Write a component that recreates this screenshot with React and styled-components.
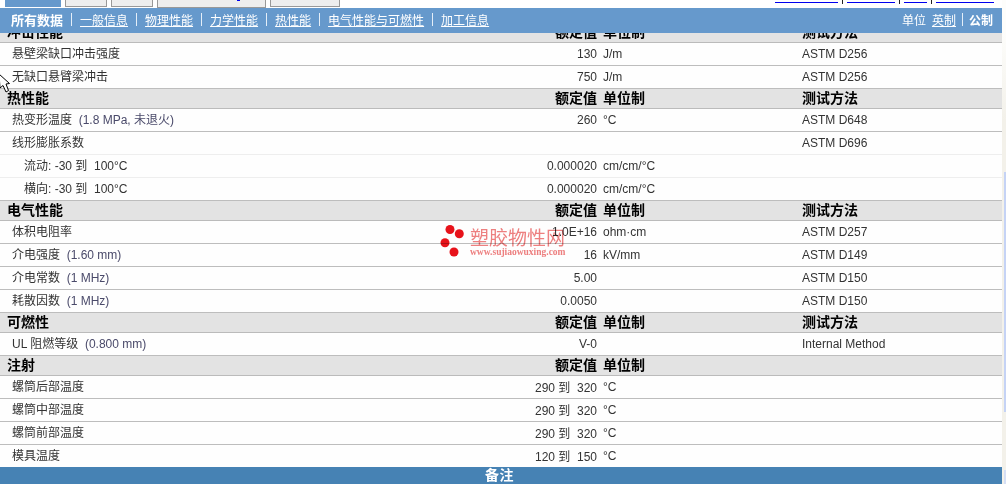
import React from 'react'
import styled, { createGlobalStyle } from 'styled-components'

const GlobalStyle = createGlobalStyle`
  html, body { margin: 0; padding: 0; background: #fff; }
  body { font-family: "Liberation Sans", "Noto Sans CJK SC", sans-serif; font-size: 12px; color: #333; }
`

const Page = styled.div`
  position: relative;
  display: flex;
  width: 1006px;
  height: 484px;
  overflow: hidden;
`

const Main = styled.div`
  display: flex;
  flex-direction: column;
  width: 1002px;
  height: 100%;
`

const TopStrip = styled.div`
  display: flex;
  justify-content: space-between;
  height: 8px;
  flex: none;
  overflow: hidden;
`

const Tabs = styled.div`
  display: flex;
  align-items: flex-start;
  gap: 4px;
  padding-left: 5px;
`

const Tab = styled.div`
  position: relative;
  box-sizing: border-box;
  width: ${(p) => p.$width}px;
  height: ${(p) => (p.$tall ? 8 : 7)}px;
  background: ${(p) => (p.$active ? '#6699cc' : '#eeeeee')};
  border: 1px solid ${(p) => (p.$active ? '#6699cc' : '#999')};
  border-top: 0;
`

const TabGlyph = styled.span`
  position: absolute;
  top: 0;
  left: 79px;
  width: 3px;
  height: 1px;
  background: #0000ee;
`

const TopLinks = styled.div`
  display: flex;
  align-items: flex-start;
  gap: 4px;
  padding-right: 8px;
`

const TopLink = styled.span`
  display: block;
  box-sizing: border-box;
  width: ${(p) => p.$width}px;
  height: 3px;
  border-bottom: 1px solid #0000ee;
`

const TopSep = styled.span`
  display: block;
  width: 1px;
  height: 4px;
  background: #222;
`

const NavBar = styled.div`
  display: flex;
  align-items: center;
  justify-content: space-between;
  flex: none;
  box-sizing: border-box;
  height: 25px;
  padding: 0 9px 2px 11px;
  background: #6699cc;
  color: #fff;
`

const NavGroup = styled.div`
  display: flex;
  align-items: center;
  gap: ${(p) => p.$gap}px;
`

const NavCurrent = styled.b`
  font-size: 13px;
  font-weight: 700;
`

const NavLink = styled.a`
  color: #fff;
  text-decoration: underline;
  font-size: 12px;
`

const NavSep = styled.span`
  width: 1px;
  height: 13px;
  background: #e4eef8;
`

const ScrollArea = styled.div`
  flex: 1;
  min-height: 0;
  overflow: hidden;
`

const Sheet = styled.div`
  margin-top: -10px;
`

const columns = `
  display: grid;
  grid-template-columns: 497px 100px 205px 200px;
  align-items: center;
  box-sizing: border-box;
`

const HeadRow = styled.div`
  ${columns}
  height: 20px;
  padding-bottom: 3px;
  background: #e3e3e3;
  border-bottom: 1px solid #bbb;
  font-family: "Noto Sans CJK SC", sans-serif;
  font-size: 14px;
  line-height: 16px;
  font-weight: 700;
  color: #000;
`

const Row = styled.div`
  ${columns}
  height: 23px;
  background: #fefefe;
  border-bottom: 1px solid ${(p) => (p.$soft ? '#eeeeee' : '#bdbdbd')};
`

const HeadName = styled.div`
  padding-left: 7px;
`

const Name = styled.div`
  padding-left: ${(p) => (p.$sub ? 24 : 12)}px;
  padding-bottom: 4px;
  white-space: pre;
`

const Value = styled.div`
  padding-bottom: ${(p) => (p.$range ? 2 : 0)}px;
  text-align: right;
  white-space: pre;
`

const Unit = styled.div`
  padding-left: 6px;
`

const Note = styled.span`
  color: #4a4a6a;
`

const FooterBar = styled.div`
  flex: none;
  box-sizing: border-box;
  height: 17px;
  padding-right: 3px;
  line-height: 16px;
  background: #4682b4;
  color: #fff;
  font-size: 14px;
  font-weight: 700;
  text-align: center;
  letter-spacing: 0.5px;
`

const ScrollTrack = styled.div`
  display: flex;
  flex-direction: column;
  align-items: flex-end;
  width: 4px;
  padding-top: 172px;
  box-sizing: border-box;
  background: linear-gradient(#fdfdfb 33px, #f3f1ea 120px);
`

const ScrollThumb = styled.div`
  width: 2px;
  height: 240px;
  background: #c5d3f5;
`

const ScrollArrow = styled.div`
  width: 2px;
  height: 14px;
  margin-top: 58px;
  background: #d5dff5;
`

const Watermark = styled.div`
  position: absolute;
  left: 440px;
  top: 224px;
  display: flex;
  gap: 4px;
  width: 130px;
  pointer-events: none;
  mix-blend-mode: multiply;
`

const MarkText = styled.div`
  display: flex;
  flex-direction: column;
  padding-top: 2px;
  color: #ee7f7f;
`

const MarkTitle = styled.div`
  font-family: "Noto Sans CJK SC", sans-serif;
  font-size: 19px;
  line-height: 21px;
  white-space: nowrap;
`

const MarkUrl = styled.div`
  font-family: "Liberation Serif", serif;
  font-size: 9.5px;
  line-height: 10px;
  font-weight: 700;
  white-space: nowrap;
`

const Cursor = styled.svg`
  position: absolute;
  left: 0;
  top: 73px;
`

const topLinkWidths = [63, 48, 23, 58]
const navItems = ['一般信息', '物理性能', '力学性能', '热性能', '电气性能与可燃性', '加工信息']

const sections = [
  {
    title: '冲击性能',
    method: '测试方法',
    rows: [
      { name: '悬壁梁缺口冲击强度', value: '130', unit: 'J/m', test: 'ASTM D256' },
      { name: '无缺口悬臂梁冲击', value: '750', unit: 'J/m', test: 'ASTM D256' }
    ]
  },
  {
    title: '热性能',
    method: '测试方法',
    rows: [
      { name: '热变形温度', note: '(1.8 MPa, 未退火)', value: '260', unit: '°C', test: 'ASTM D648' },
      { name: '线形膨胀系数', test: 'ASTM D696', soft: true },
      { name: '流动: -30 到  100°C', sub: true, value: '0.000020', unit: 'cm/cm/°C', soft: true },
      { name: '横向: -30 到  100°C', sub: true, value: '0.000020', unit: 'cm/cm/°C' }
    ]
  },
  {
    title: '电气性能',
    method: '测试方法',
    rows: [
      { name: '体积电阻率', value: '1.0E+16', unit: 'ohm·cm', test: 'ASTM D257' },
      { name: '介电强度', note: '(1.60 mm)', value: '16', unit: 'kV/mm', test: 'ASTM D149' },
      { name: '介电常数', note: '(1 MHz)', value: '5.00', test: 'ASTM D150' },
      { name: '耗散因数', note: '(1 MHz)', value: '0.0050', test: 'ASTM D150' }
    ]
  },
  {
    title: '可燃性',
    method: '测试方法',
    rows: [{ name: 'UL 阻燃等级', note: '(0.800 mm)', value: 'V-0', test: 'Internal Method' }]
  },
  {
    title: '注射',
    rows: [
      { name: '螺筒后部温度', value: '290 到  320', unit: '°C', range: true },
      { name: '螺筒中部温度', value: '290 到  320', unit: '°C', range: true },
      { name: '螺筒前部温度', value: '290 到  320', unit: '°C', range: true },
      { name: '模具温度', value: '120 到  150', unit: '°C', range: true }
    ]
  }
]

const Section = ({ section }) => (
  <>
    <HeadRow>
      <HeadName>{section.title}</HeadName>
      <Value>额定值</Value>
      <Unit>单位制</Unit>
      <div>{section.method}</div>
    </HeadRow>
    {section.rows.map((row) => (
      <Row key={row.name} $soft={row.soft}>
        <Name $sub={row.sub}>
          {row.name}
          {row.note && <Note>{`  ${row.note}`}</Note>}
        </Name>
        <Value $range={row.range}>{row.value}</Value>
        <Unit>{row.unit}</Unit>
        <div>{row.test}</div>
      </Row>
    ))}
  </>
)

const App = () => (
  <Page>
    <GlobalStyle />
    <Main>
      <TopStrip>
        <Tabs>
          <Tab $width={56} $active />
          <Tab $width={42} />
          <Tab $width={42} />
          <Tab $width={109} $tall>
            <TabGlyph />
          </Tab>
          <Tab $width={70} />
        </Tabs>
        <TopLinks>
          {topLinkWidths.map((width, i) => (
            <React.Fragment key={width}>
              {i > 0 && <TopSep />}
              <TopLink $width={width} />
            </React.Fragment>
          ))}
        </TopLinks>
      </TopStrip>
      <NavBar>
        <NavGroup $gap={8}>
          <NavCurrent>所有数据</NavCurrent>
          {navItems.map((item) => (
            <React.Fragment key={item}>
              <NavSep />
              <NavLink>{item}</NavLink>
            </React.Fragment>
          ))}
        </NavGroup>
        <NavGroup $gap={6}>
          <span>单位</span>
          <NavLink>英制</NavLink>
          <NavSep />
          <b>公制</b>
        </NavGroup>
      </NavBar>
      <ScrollArea>
        <Sheet>
          {sections.map((section) => (
            <Section key={section.title} section={section} />
          ))}
        </Sheet>
      </ScrollArea>
      <FooterBar>备注</FooterBar>
    </Main>
    <ScrollTrack>
      <ScrollThumb />
      <ScrollArrow />
    </ScrollTrack>
    <Watermark>
      <svg width="26" height="34" viewBox="0 0 26 34">
        <circle cx="10" cy="5.5" r="4.5" fill="#e8121a" />
        <circle cx="19.3" cy="9.8" r="4.5" fill="#e8121a" />
        <circle cx="5" cy="18.8" r="4.5" fill="#e8121a" />
        <circle cx="14" cy="28" r="4.5" fill="#e8121a" />
      </svg>
      <MarkText>
        <MarkTitle>塑胶物性网</MarkTitle>
        <MarkUrl>www.sujiaowuxing.com</MarkUrl>
      </MarkText>
    </Watermark>
    <Cursor width="12" height="21" viewBox="0 0 12 21">
      <path d="M-1 1 L9.5 10.5 L6 11 L8.5 17.5 L6 19 L3 12.5 L0 15 Z" fill="#fff" stroke="#000" strokeWidth="1" />
    </Cursor>
  </Page>
)

export default App
